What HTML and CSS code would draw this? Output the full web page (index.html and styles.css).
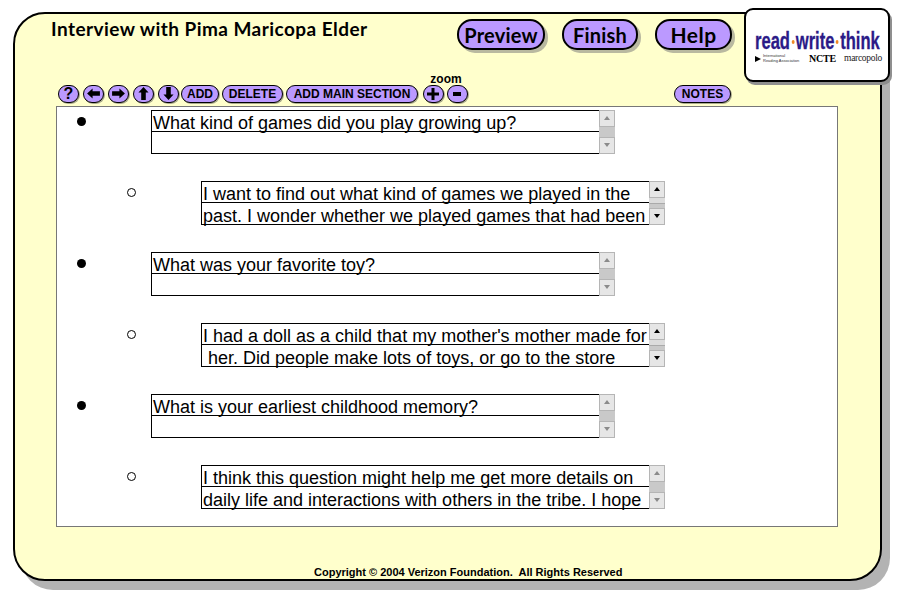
FILE: index.html
```
<!DOCTYPE html>
<html lang="en">
<head>
<meta charset="utf-8">
<title>Interview with Pima Maricopa Elder</title>
<link rel="stylesheet" href="styles.css">
</head>
<body>
<div class="stage">
  <main class="panel">
    <header class="top">
      <h1 class="title">Interview with Pima Maricopa Elder</h1>
      <nav class="mainnav">
        <a class="bigbtn btn-preview">Preview</a>
        <a class="bigbtn btn-finish">Finish</a>
        <a class="bigbtn btn-help">Help</a>
      </nav>
    </header>
    <div class="toolbar">
      <a class="tool round q">?</a>
      <a class="tool round"><svg viewBox="0 0 14 12" class="ico"><path d="M0 6 6 .5V3.500H14V8.500H6V11.500Z"/></svg></a>
      <a class="tool round"><svg viewBox="0 0 14 12" class="ico"><path d="M14 6 8 .5V3.500H0V8.500H8V11.500Z"/></svg></a>
      <a class="tool round"><svg viewBox="0 0 12 14" class="ico v"><path d="M6 0 11.500 6H8.500V14H3.500V6H.5Z"/></svg></a>
      <a class="tool round"><svg viewBox="0 0 12 14" class="ico v"><path d="M6 14 11.500 8H8.500V0H3.500V8H.5Z"/></svg></a>
      <a class="tool w-add">ADD</a>
      <a class="tool w-del">DELETE</a>
      <a class="tool w-main">ADD MAIN SECTION</a>
      <div class="zoomgroup">
        <span class="zoomlabel">zoom</span>
        <div class="zoomrow">
          <a class="tool round"><svg viewBox="0 0 12 12" class="ico pm"><path d="M4.500 0H7.500V4.500H12V7.500H7.500V12H4.500V7.500H0V4.500H4.500Z"/></svg></a>
          <a class="tool round"><svg viewBox="0 0 8 4" class="ico mn"><path d="M0 0H8V4H0Z"/></svg></a>
        </div>
      </div>
      <a class="tool w-notes">NOTES</a>
    </div>
    <section class="outline">
      <div class="item">
        <span class="bullet disc"></span>
        <div class="field"><div class="lines"><p>What kind of games did you play growing up?</p><p></p></div>
          <div class="sb off"><i class="sb-btn"><b class="up"></b></i><i class="sb-btn"><b class="down"></b></i></div></div>
      </div>
      <div class="item sub">
        <span class="bullet ring"></span>
        <div class="field"><div class="lines"><p>I want to find out what kind of games we played in the</p><p>past. I wonder whether we played games that had been</p></div>
          <div class="sb"><i class="sb-btn"><b class="up"></b></i><i class="sb-thumb"></i><i class="sb-btn"><b class="down"></b></i></div></div>
      </div>
      <div class="item">
        <span class="bullet disc"></span>
        <div class="field"><div class="lines"><p>What was your favorite toy?</p><p></p></div>
          <div class="sb off"><i class="sb-btn"><b class="up"></b></i><i class="sb-btn"><b class="down"></b></i></div></div>
      </div>
      <div class="item sub">
        <span class="bullet ring"></span>
        <div class="field"><div class="lines"><p>I had a doll as a child that my mother's mother made for</p><p> her. Did people make lots of toys, or go to the store</p></div>
          <div class="sb"><i class="sb-btn"><b class="up"></b></i><i class="sb-thumb"></i><i class="sb-btn"><b class="down"></b></i></div></div>
      </div>
      <div class="item">
        <span class="bullet disc"></span>
        <div class="field"><div class="lines"><p>What is your earliest childhood memory?</p><p></p></div>
          <div class="sb off"><i class="sb-btn"><b class="up"></b></i><i class="sb-btn"><b class="down"></b></i></div></div>
      </div>
      <div class="item sub">
        <span class="bullet ring"></span>
        <div class="field"><div class="lines"><p>I think this question might help me get more details on</p><p>daily life and interactions with others in the tribe. I hope</p></div>
          <div class="sb off"><i class="sb-btn"><b class="up"></b></i><i class="sb-btn"><b class="down"></b></i></div></div>
      </div>
    </section>
    <footer class="copy">Copyright © 2004 Verizon Foundation.&nbsp; All Rights Reserved</footer>
  </main>
  <aside class="logo">
    <div class="logo-main">read<span class="dot"></span>write<span class="dot"></span>think</div>
    <div class="logo-sub">
      <span class="ira"><svg viewBox="0 0 6 6" class="ira-ico"><path d="M0 0 6 3 0 6Z"/></svg><span>International<br>Reading Association</span></span>
      <span class="ncte">NCTE</span>
      <span class="mp">marcopolo</span>
    </div>
  </aside>
</div>
</body>
</html>
```
FILE: styles.css
```
* { box-sizing: border-box; }
html, body { margin: 0; padding: 0; background: #fff; }
body { font-family: "Liberation Sans", Arial, sans-serif; color: #000; }
.stage { position: relative; width: 902px; height: 593px; overflow: hidden; padding: 12px 0 0 13px; }
.panel {
  width: 869px; height: 569px;
  background: #ffffcc;
  border: 2px solid #000;
  border-radius: 32px;
  box-shadow: 8px 9px 0 #b3b3b3;
  padding: 0 0 0 41px;
  display: flex; flex-direction: column;
}
.top { display: flex; height: 58px; }
.title {
  margin: 3px 0 0 -5px; width: 406px;
  font: 700 19px/24px "Lato", sans-serif;
  letter-spacing: .45px;
  white-space: nowrap;
}
.mainnav { display: flex; gap: 17px; padding-top: 5px; }
.bigbtn {
  display: flex; align-items: center; justify-content: center;
  height: 31px; width: 77px;
  background: #bb99ff;
  border: 2px solid #000;
  border-radius: 15px;
  box-shadow: 3px 3px 0 #b9b9a0;
  font: 700 20px/1 "Lato", sans-serif;
  letter-spacing: .2px;
}
.btn-preview { width: 88px; }
.btn-finish { width: 76px; }
.btn-help { font-size: 21px; letter-spacing: .5px; }
.toolbar { display: flex; align-items: flex-end; height: 31px; padding-left: 2px; }
.tool {
  display: flex; align-items: center; justify-content: center;
  height: 18px; margin-right: 4px;
  background: #bb99ff;
  border: 1px solid #000;
  border-radius: 9px;
  box-shadow: 1px 1px 0 #a9a98c;
  font: 700 12px/1 "Liberation Sans", sans-serif;
}
.round { width: 21px; }
.q { font-size: 16px; }
.ico { width: 13px; height: 11px; fill: #000; display: block; }
.ico.v { width: 11px; height: 13px; }
.ico.pm { width: 12px; height: 12px; }
.ico.mn { width: 8px; height: 4px; }
.w-add { width: 38px; margin-left: -2px; margin-right: 3px; }
.w-del { width: 61px; margin-right: 3px; }
.w-main { width: 132px; margin-right: 4px; }
.zoomgroup { display: flex; flex-direction: column; align-items: center; width: 46px; margin-right: 206px; }
.zoomrow { display: flex; gap: 3px; }
.zoomrow .tool { margin-right: 0; }
.zoomlabel { font: 700 12px/11px "Liberation Sans", sans-serif; margin: 0 0 0 2px; }
.w-notes { width: 57px; margin-right: 0; }
.outline {
  margin-top: 3px;
  width: 782px; height: 422px;
  background: #fff;
  border: 1px solid #777;
  padding: 3px 0 0 20px;
  display: flex; flex-direction: column; gap: 27px;
}
.item { display: flex; height: 44px; flex: none; }
.item.sub { margin-left: 50px; }
.bullet { width: 9px; height: 9px; margin: 7px 65px 0 0; border-radius: 50%; flex: none; }
.disc { background: #000; }
.ring { background: #fff; border: 1px solid #000; }
.field { display: flex; }
.lines { width: 448px; border: solid #000; border-width: 1px 0 1px 1px; }
.lines p {
  margin: 0; height: 21px; line-height: 24px; padding-left: 1px;
  font-size: 18px; white-space: pre;
  border-bottom: 1px solid #000;
}
.lines p:last-child { border-bottom: 0; line-height: 26px; }
.sb { width: 16px; background: #c9c9c9; display: flex; flex-direction: column; justify-content: space-between; }
.sb-btn {
  display: flex; align-items: center; justify-content: center;
  height: 17px; background: #e6e6e6; border: 1px solid #b5b5b5;
}
.sb-thumb { height: 6px; flex: none; background: #dcdcdc; border-bottom: 1px solid #aaa; margin-bottom: auto; }
.sb-btn b { width: 0; height: 0; border-left: 3.500px solid transparent; border-right: 3.500px solid transparent; }
.sb-btn .up { border-bottom: 4px solid #000; }
.sb-btn .down { border-top: 4px solid #000; }
.off .sb-btn b { opacity: .4; }
.copy {
  margin: 39px 0 0 258px;
  font: 700 11px/13px "Liberation Sans", sans-serif;
  white-space: nowrap;
}
.logo {
  position: absolute; left: 744px; top: 8px;
  width: 146px; height: 74px;
  background: #fff;
  border: 2px solid #000;
  border-radius: 9px;
  box-shadow: 2px 3px 0 #8f8f8f;
  padding: 22px 6px 0 9px;
}
.logo-main {
  font: 700 23px/19px "Liberation Sans", sans-serif;
  color: #2b1a87;
  white-space: nowrap;
  transform: scaleX(.72);
  transform-origin: left center;
  width: 180px;
  -webkit-text-stroke: .3px #2b1a87;
}
.dot { display: inline-block; width: 4px; height: 4px; border-radius: 50%; background: #f08a24; margin: 0 2px; vertical-align: 5px; }
.logo-sub { display: flex; align-items: center; margin-top: 3px; }
.ira { display: flex; align-items: center; gap: 2px; font-size: 4px; line-height: 4.500px; color: #333; white-space: nowrap; width: 57px; }
.ira-ico { width: 6px; height: 6px; fill: #000; }
.ncte { font: 700 10px/9px "Liberation Serif", serif; letter-spacing: -.2px; margin-right: 8px; }
.mp { font: 400 9.500px/9px "Liberation Serif", serif; letter-spacing: -.3px; color: #222; }
```
